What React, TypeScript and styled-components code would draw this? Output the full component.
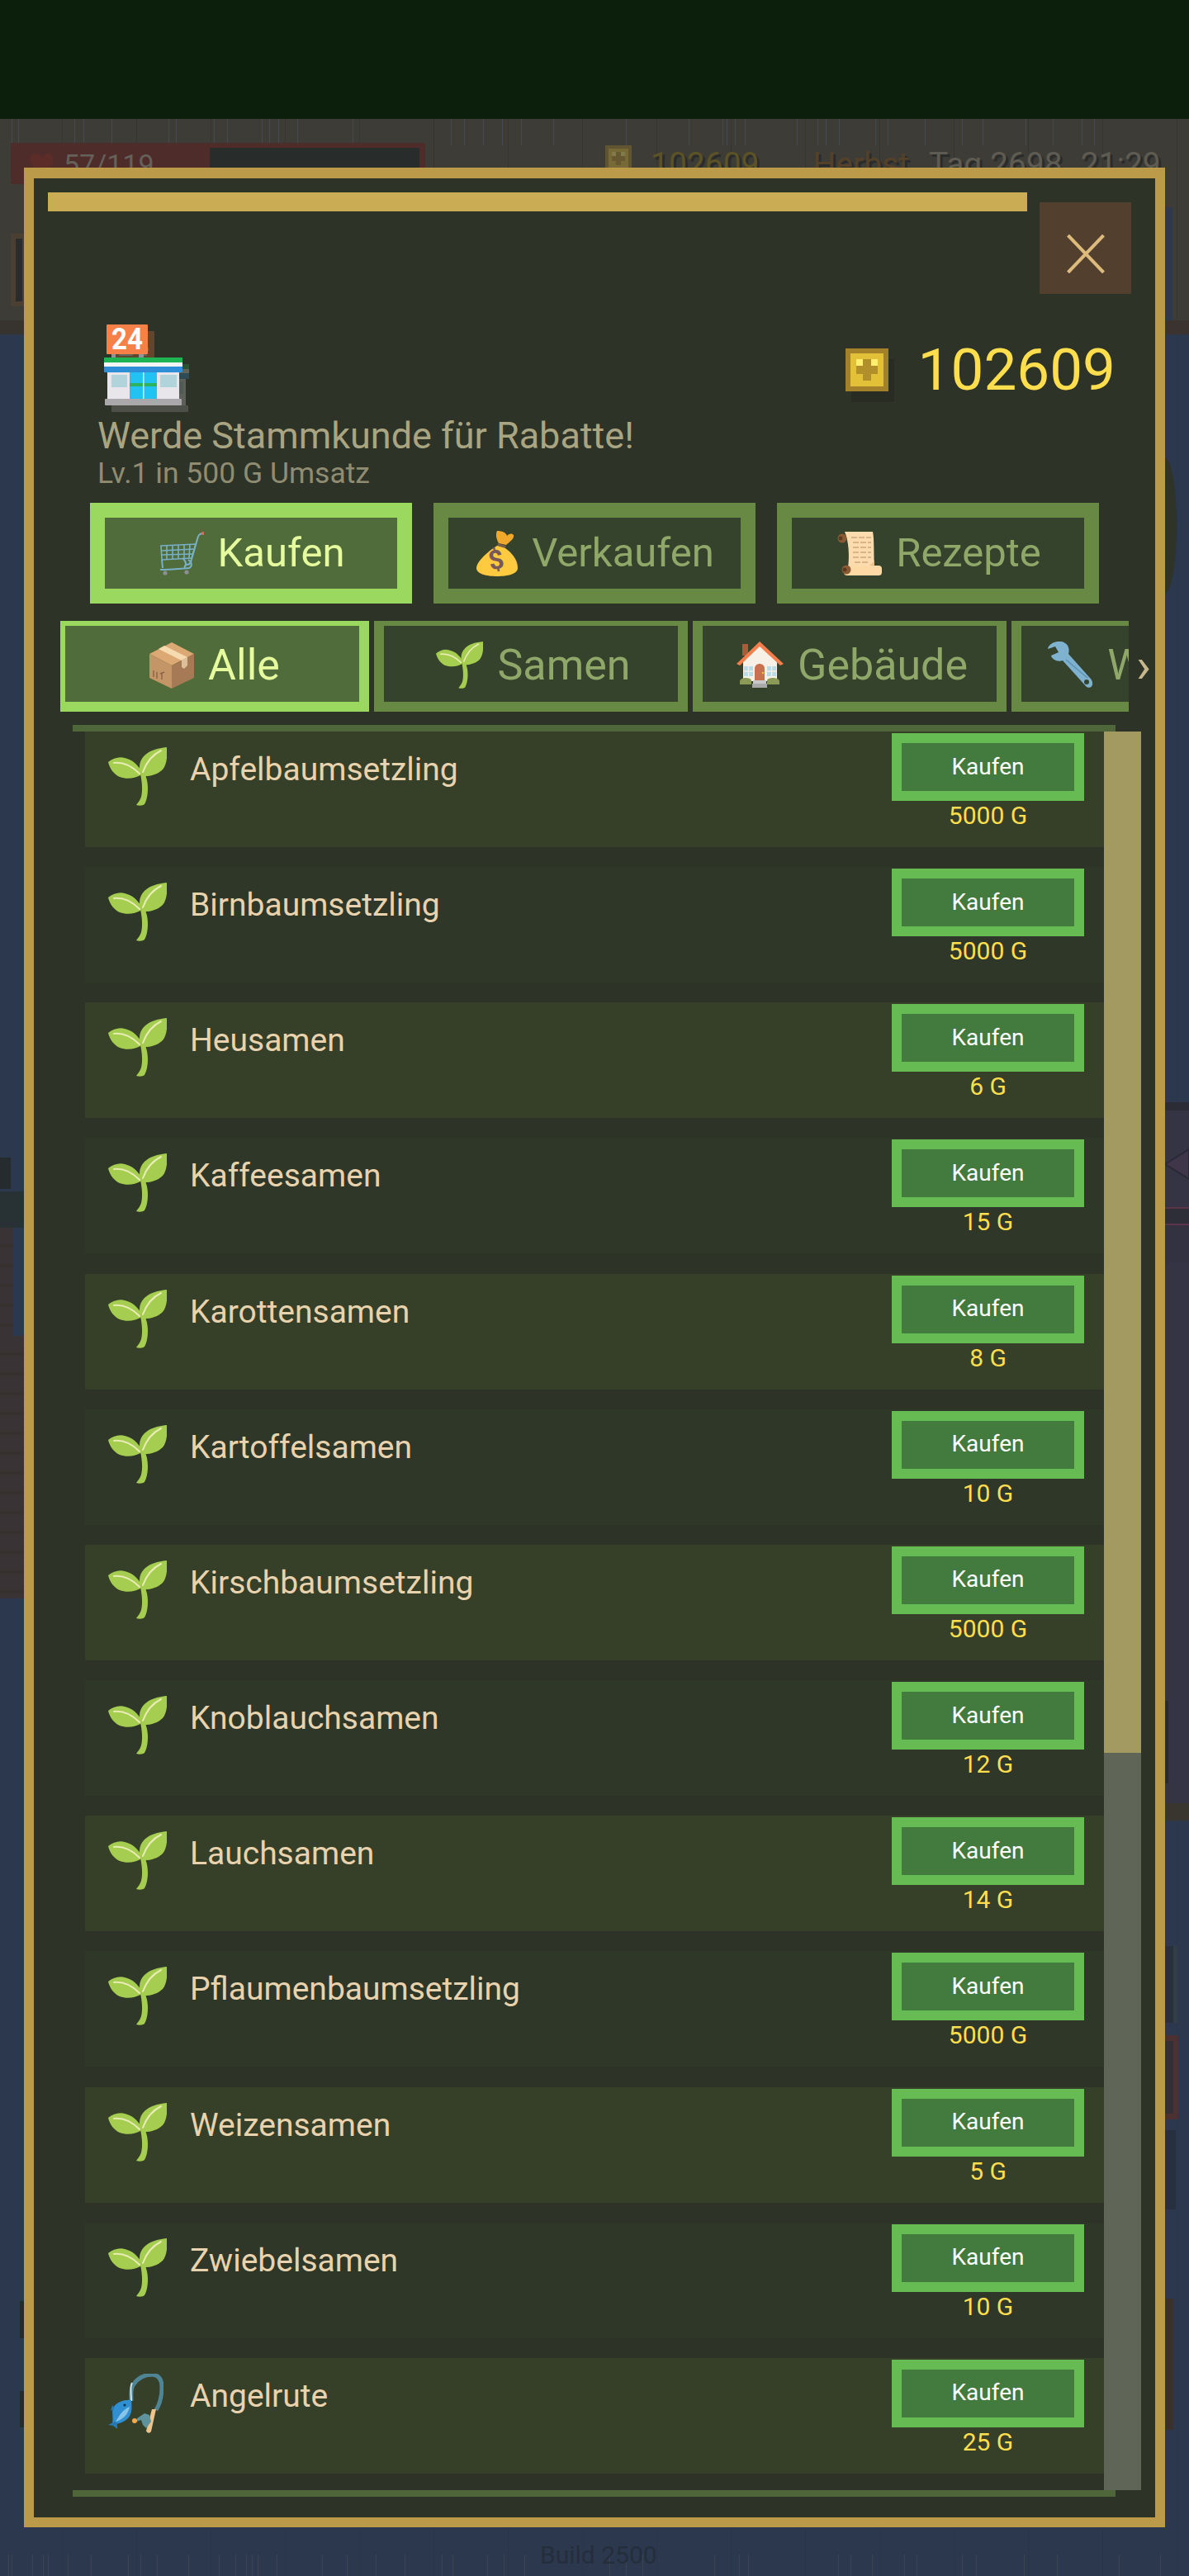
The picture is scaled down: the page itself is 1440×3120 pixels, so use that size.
import React from 'react';
import styled, { createGlobalStyle } from 'styled-components';

const GlobalStyle = createGlobalStyle`
  html, body {
    margin: 0;
    padding: 0;
    background: #2c384e;
  }
  * {
    box-sizing: border-box;
  }
`;

const Page = styled.div`
  position: relative;
  width: 1440px;
  height: 3120px;
  overflow: hidden;
  font-family: Roboto, "Liberation Sans", sans-serif;
`;

/* dimmed game scene behind the dialog */
const Scene = styled.div`
  display: flex;
  flex-direction: column;
  height: 100%;
  background: repeating-linear-gradient(90deg, transparent 0 75px, #2a3549 75px 76px, transparent 76px 90px), #2c384e;
`;

const NotchBar = styled.div`
  height: 144px;
  background: #0c1e0c;
`;

const Wall = styled.div`
  height: 244px;
  background: repeating-linear-gradient(90deg, transparent 0 75px, #363530 75px 76px, transparent 76px 90px), #3e3c36;
`;

const Ledge = styled.div`
  height: 17px;
  background: #37332e;
`;

const Decor = styled.div<{ $x: number; $y: number; $w: number; $h: number; $c: string }>`
  position: absolute;
  left: ${({ $x }) => $x}px;
  top: ${({ $y }) => $y}px;
  width: ${({ $w }) => $w}px;
  height: ${({ $h }) => $h}px;
  background: ${({ $c }) => $c};
`;

const Bricks = styled(Decor)`
  background: repeating-linear-gradient(180deg, ${({ $c }) => $c} 0 20px, #36302f 20px 24px);
`;

const Bump = styled.div`
  position: absolute;
  left: 1411px;
  top: 555px;
  width: 14px;
  height: 163px;
  background: #2e3427;
  border-radius: 0 100% 100% 0 / 0 50% 50% 0;
`;

const Diamond = styled.svg`
  position: absolute;
  left: 1411px;
  top: 1380px;
`;

const HudBar = styled.div`
  position: absolute;
  left: 13px;
  top: 173px;
  width: 502px;
  height: 50px;
  display: flex;
  padding: 6px 7px 0 0;
  background: #4d2c2a;
`;

const HudFill = styled.div`
  width: 241px;
  display: flex;
  gap: 12px;
  align-items: flex-start;
  padding-left: 23px;
  color: #65605a;
  font-size: 34px;
  line-height: 40px;
`;

const HudEmpty = styled.div`
  flex: 1;
  background: #282d2b;
`;

const HudFrame = styled.div`
  position: absolute;
  left: 13px;
  top: 283px;
  width: 20px;
  height: 88px;
  border: 6px solid #4a3f30;
  background: #282d2b;
`;

const HudRight = styled.div`
  position: absolute;
  left: 733px;
  top: 176px;
  display: flex;
  align-items: flex-start;
`;

const HudText = styled.span<{ $color: string; $gap: number }>`
  margin-left: ${({ $gap }) => $gap}px;
  color: ${({ $color }) => $color};
  font-size: 39px;
  line-height: 46px;
  white-space: nowrap;
  text-shadow: 3px 3px 0 #2a2c2b;
`;

const BuildTag = styled.div`
  position: absolute;
  left: 654px;
  top: 3077px;
  color: #252e3c;
  font-size: 30px;
  line-height: 35px;
  white-space: nowrap;
`;

/* dialog */
const Modal = styled.div`
  position: absolute;
  left: 29px;
  top: 203px;
  width: 1382px;
  height: 2858px;
  display: flex;
  flex-direction: column;
  border: 12px solid #bb9b4a;
  border-top-width: 13px;
  background: #2e3327;
`;

const TopRow = styled.div`
  display: flex;
  gap: 15px;
  align-items: flex-start;
  padding: 17px 0 0 17px;
`;

const TitleBar = styled.div`
  width: 1186px;
  height: 23px;
  background: #c9ac53;
`;

const CloseButton = styled.button`
  width: 111px;
  height: 111px;
  margin-top: 12px;
  padding: 14px 0 0;
  display: flex;
  align-items: center;
  justify-content: center;
  border: 0;
  background: #523f2e;
`;

const ShopHead = styled.div`
  display: flex;
  justify-content: space-between;
  align-items: flex-start;
  padding: 37px 48px 0 77px;
`;

const ShopInfo = styled.div`
  display: flex;
  flex-direction: column;
`;

const StoreBox = styled.div`
  padding-left: 8px;
  height: 110px;
`;

const ShopTitle = styled.div`
  color: #a9a582;
  font-size: 45px;
  line-height: 50px;
`;

const ShopLevel = styled.div`
  color: #8f8c72;
  font-size: 35.5px;
  line-height: 41px;
`;

const GoldBox = styled.div`
  display: flex;
  align-items: flex-start;
  gap: 36px;
  padding-top: 29px;
`;

const GoldAmount = styled.div`
  margin-top: -15px;
  color: #ffde4d;
  font-size: 71px;
  line-height: 82px;
`;

const MainTabs = styled.div`
  display: flex;
  gap: 26px;
  margin: 15px 0 0 68px;
`;

const MainTab = styled.div<{ $active?: boolean }>`
  width: 390px;
  height: 122px;
  padding-left: 2px;
  display: flex;
  align-items: center;
  justify-content: center;
  gap: 17px;
  border: 18px solid ${({ $active }) => ($active ? '#9ad85f' : '#688943')};
  background: ${({ $active }) => ($active ? '#4f6c3a' : '#35422c')};
  color: ${({ $active }) => ($active ? '#e6fb9e' : '#8fa768')};
  font-size: 49px;
  line-height: 56px;
`;

const SubTabsWrap = styled.div`
  position: relative;
  width: 1294px;
  height: 110px;
  margin: 21px 0 0 32px;
`;

const SubTabs = styled.div`
  height: 100%;
  display: flex;
  gap: 6px;
  overflow: hidden;
`;

const SubTab = styled.div<{ $active?: boolean }>`
  flex: none;
  width: 380px;
  height: 116px;
  margin-top: -6px;
  padding: 3px 0 0 6px;
  display: flex;
  align-items: center;
  justify-content: center;
  gap: 17px;
  border: 12px solid ${({ $active }) => ($active ? '#9ad85f' : '#688943')};
  background: ${({ $active }) => ($active ? '#4f6c3a' : '#35422c')};
  color: ${({ $active }) => ($active ? '#e6fb9e' : '#8fa768')};
  font-size: 52px;
  line-height: 60px;
  white-space: nowrap;
  &:first-child {
    margin-left: -6px;
  }
`;

const MoreArrow = styled.span`
  position: absolute;
  right: -27px;
  top: 24px;
  color: #c6b78c;
  font-size: 60px;
  line-height: 60px;
`;

const Rule = styled.div<{ $top?: number }>`
  width: 1263px;
  height: 8px;
  margin: ${({ $top }) => $top ?? 0}px 0 0 47px;
  background: #4f653a;
`;

const ListArea = styled.div`
  height: 2130px;
  display: flex;
  margin-left: 62px;
`;

const List = styled.div`
  width: 1234px;
  display: flex;
  flex-direction: column;
  gap: 24.17px;
`;

const Row = styled.div<{ $odd: boolean }>`
  flex: none;
  height: 140px;
  display: flex;
  align-items: flex-start;
  padding-right: 24px;
  background: ${({ $odd }) => ($odd ? '#363f27' : '#2e3728')};
`;

const RowIcon = styled.div`
  flex: none;
  width: 127px;
  padding: 19px 0 0 28px;
`;

const RowName = styled.div`
  flex: 1;
  margin-top: 23px;
  color: #e8d3ae;
  font-size: 39px;
  line-height: 46px;
`;

const BuyColumn = styled.div`
  width: 233px;
  display: flex;
  flex-direction: column;
  align-items: center;
  padding-top: 2px;
`;

const BuyButton = styled.button`
  width: 233px;
  height: 82px;
  padding: 0 0 2px;
  border: 12px solid #66bb53;
  background: #437a3d;
  color: #ffffff;
  font-family: inherit;
  font-size: 28px;
  line-height: 33px;
`;

const Price = styled.div`
  margin-top: 1px;
  color: #ffde4d;
  font-size: 30px;
  line-height: 34px;
`;

const ScrollTrack = styled.div`
  width: 45px;
  height: 100%;
  background: #5f6557;
`;

const ScrollThumb = styled.div`
  height: 1237px;
  background: #a29a60;
`;

const CoinBox = styled.svg<{ $shadow?: boolean; $dim?: boolean }>`
  flex: none;
  display: block;
  opacity: ${({ $dim }) => ($dim ? 0.35 : 1)};
  ${({ $shadow }) => ($shadow ? 'box-shadow: 7px 13px 0 rgba(0, 0, 0, 0.12);' : '')}
`;

const Coin = ({ size = 52, shadow = false, dim = false }: { size?: number; shadow?: boolean; dim?: boolean }) => (
  <CoinBox $shadow={shadow} $dim={dim} width={size} height={size} viewBox="0 0 52 52" shapeRendering="crispEdges">
    <rect width="52" height="52" fill="#a2812a" />
    <rect x="6" y="6" width="40" height="40" fill="#e2c037" />
    <rect x="13" y="21" width="26" height="10" fill="#b1902c" />
    <rect x="21" y="13" width="10" height="26" fill="#b1902c" />
    <rect x="13" y="13" width="8" height="8" fill="#ffee70" />
    <rect x="31" y="13" width="8" height="8" fill="#ffee70" />
  </CoinBox>
);

const Sprout = ({ size = 71 }: { size?: number }) => (
  <svg width={size} height={size} viewBox="0 0 71 71" style={{ display: 'block' }}>
    <path d="M39 32C41 42 42 52 40 60C39 64 36 67 34 70C37 71 42 71 44 69C48 62 49 50 47 40L45 33Z" fill="#a5cd50" />
    <path d="M0 18C6 13 14 11 20 13C29 15 36 21 40 29L39 34C32 38 22 39 14 36C7 33 2 26 0 18Z" fill="#a5cd50" />
    <path d="M71 0C60 1 50 4 44 10C38 16 36 24 40 35C50 36 60 33 66 27C71 21 72 10 71 0Z" fill="#a5cd50" />
    <path d="M7 19C18 18 29 23 38 32" fill="none" stroke="#e9ecb4" strokeWidth="2" strokeLinecap="round" />
    <path d="M64 4C54 9 46 19 42 30" fill="none" stroke="#e9ecb4" strokeWidth="2" strokeLinecap="round" />
  </svg>
);

const Cart = () => (
  <svg width="54" height="54" viewBox="0 0 54 54" style={{ display: 'block' }}>
    <g fill="none" stroke="#79b0c9" strokeWidth="1.6">
      <path d="M53 3C48 3 47 6 46 10L38 38C37 40 36 41 33 41" strokeWidth="2" />
      <path d="M2 18L44 16L39 33L3 35Z" />
      <path d="M2 24L42 22M3 29L40 28" />
      <path d="M9 18L9 34M16 18L16 34M23 17L23 34M30 17L30 34M37 17L36 33" />
      <path d="M3 35L4 45M1 47C10 47 22 46 36 45C40 43 40 38 35 35M28 33C33 37 33 42 30 44" strokeWidth="2" />
    </g>
    <circle cx="53" cy="3" r="2" fill="#dc6e5e" />
    <circle cx="7" cy="51" r="2.6" fill="#8d8f94" />
    <circle cx="33" cy="50" r="2.6" fill="#8d8f94" />
  </svg>
);

const MoneyBag = () => (
  <svg width="50" height="55" viewBox="0 0 50 55" style={{ display: 'block' }}>
    <path d="M25 0C23 4 24 10 27 15L36 17C42 12 46 9 45 5C42 2 39 4 37 6C36 2 31 0 25 0Z" fill="#f0a92c" />
    <path d="M26 15L36 18L34 22L25 19Z" fill="#7b5c4c" />
    <path d="M25 18C12 26 0 38 0 45C0 52 12 55 25 55C38 55 50 52 50 45C50 34 42 26 35 21Z" fill="#fdca40" />
    <text x="24" y="46" fontFamily="Roboto, sans-serif" fontWeight="700" fontSize="32" fill="#77595c" textAnchor="middle" transform="rotate(-12 24 36)">$</text>
  </svg>
);

const ScrollIcon = () => (
  <svg width="55" height="54" viewBox="0 0 55 54" style={{ display: 'block' }}>
    <path d="M10 1H44C46 10 45 30 46 44H14C16 32 15 12 10 1Z" fill="#fcdcae" />
    <path d="M18 8H42M20 14H42M20 20H42M20 26H42M20 32H42M22 38H40" stroke="#cfa778" strokeWidth="1.4" strokeDasharray="7 2" />
    <path d="M36 44C41 42 45 38 46 35V44Z" fill="#eebf83" />
    <rect x="9" y="42" width="46" height="12" rx="4" fill="#fdd9a5" />
    <circle cx="7" cy="9" r="5.5" fill="#8a5a34" />
    <circle cx="5" cy="9" r="2.4" fill="#5c3a21" />
    <circle cx="12" cy="47" r="5.5" fill="#8a5a34" />
    <circle cx="10" cy="47" r="2.4" fill="#5c3a21" />
  </svg>
);

const BoxIcon = () => (
  <svg width="54" height="56" viewBox="0 0 54 56" style={{ display: 'block' }}>
    <path d="M27 0L54 14L27 28L0 14Z" fill="#dca974" />
    <path d="M0 14L27 28V56L0 43Z" fill="#c49566" />
    <path d="M54 14L27 28V56L54 43Z" fill="#a57a55" />
    <path d="M11 8L18 4L46 18L39 22Z" fill="#f6dbb0" />
    <path d="M39 22L46 18V28L42 32L39 30Z" fill="#ddc09a" />
    <path d="M5 34V42M9 36V44M13 38L18 36M15 37V45" stroke="#8a6545" strokeWidth="1.4" fill="none" />
  </svg>
);

const HouseIcon = () => (
  <svg width="57" height="57" viewBox="0 0 57 57" style={{ display: 'block' }}>
    <rect x="7" y="3" width="7" height="14" fill="#a85c3c" />
    <path d="M8 24L28 4L49 24V48H8Z" fill="#f7f0e6" />
    <path d="M28 0L57 27L53 29L28 6L4 29L0 27Z" fill="#f47f4c" />
    <rect x="9" y="30" width="11" height="12" fill="#b8dbe8" />
    <rect x="37" y="30" width="11" height="12" fill="#b8dbe8" />
    <path d="M14.5 30V42M9 36H20M42.5 30V42M37 36H48" stroke="#f7f0e6" strokeWidth="1.3" />
    <path d="M22 47V33C22 25 34 25 34 33V47Z" fill="#c9714f" />
    <circle cx="32" cy="38" r="1.3" fill="#f1c232" />
    <path d="M4 52V48C5 43 17 43 18 47V52Z" fill="#8c9a58" />
    <path d="M37 52V47C38 43 51 43 52 48V52Z" fill="#8c9a58" />
    <rect x="20" y="47" width="16" height="4" fill="#c9c9c9" />
    <rect x="19" y="51" width="18" height="5" fill="#a9a9a9" />
  </svg>
);

const WrenchIcon = () => (
  <svg width="57" height="57" viewBox="0 0 57 57" style={{ display: 'block' }}>
    <path d="M19 0C11 -1 3 3 2 9L11 6L15 13L6 17C7 22 14 25 20 23L48 54C52 58 57 55 56 50C56 47 54 45 52 43L27 15C29 8 26 2 19 0Z" fill="#7fb2cf" />
    <circle cx="49" cy="49" r="3" fill="#35422c" />
    <path d="M24 22L50 44" stroke="#5f93b0" strokeWidth="1.6" />
  </svg>
);

const FishingRod = () => (
  <svg width="67" height="73" viewBox="0 0 67 73" style={{ display: 'block' }}>
    <path d="M28 33C28 26 27 20 30 14C36 4 46 1 54 1C62 2 65 8 65 16C65 26 63 36 58 44" fill="none" stroke="#4f8494" strokeWidth="5" />
    <path d="M29 11C26 16 28 24 28 33" fill="none" stroke="#cfe2e6" strokeWidth="2" />
    <path d="M58 43L52 70C50 73 47 72 46 69C49 60 51 50 53 43Z" fill="#eec48a" />
    <path d="M35 54L44 48L50 50L52 58L46 66L42 62L40 56L34 58Z" fill="#5f939b" />
    <circle cx="32" cy="57" r="3" fill="#f4a94e" />
    <path d="M28 32C20 31 11 34 7 40C3 45 7 52 5 60C9 62 18 60 24 54C29 49 29 40 28 32Z" fill="#2f8fd0" />
    <path d="M26 40C24 48 20 55 9 58C14 50 17 44 26 40Z" fill="#86c4ea" />
    <path d="M5 38L3 45L8 42Z" fill="#2a75b5" />
    <path d="M8 58L0 62L6 63L11 67L11 60Z" fill="#2a75b5" />
    <circle cx="20" cy="38" r="1.6" fill="#12334f" />
  </svg>
);

const Storefront = () => (
  <g>
    <rect x="3" y="0" width="50" height="36" rx="1" fill="#f58148" />
    <text x="28" y="30" textAnchor="middle" fontFamily="Roboto, sans-serif" fontWeight="700" fontSize="37" fill="#ffffff" textLength="38" lengthAdjust="spacingAndGlyphs">24</text>
    <rect x="9" y="36" width="5" height="5" fill="#8f9499" />
    <rect x="42" y="36" width="6" height="5" fill="#8f9499" />
    <rect x="0" y="40" width="95" height="6" fill="#1eb454" />
    <rect x="0" y="46" width="95" height="5" fill="#f2f4f4" />
    <rect x="0" y="51" width="95" height="7" rx="1" fill="#2e8ed8" />
    <rect x="4" y="58" width="87" height="32" fill="#e8e6ea" />
    <rect x="9" y="61" width="19" height="15" fill="#b0d4da" />
    <rect x="68" y="61" width="20" height="15" fill="#b0d4da" />
    <rect x="31" y="58" width="33" height="32" fill="#22c3f3" />
    <rect x="31" y="71" width="33" height="4" fill="#2cb35e" />
    <rect x="47" y="58" width="1.5" height="32" fill="#dff4fa" />
    <rect x="1" y="90" width="93" height="8" rx="1" fill="#aaa8aa" />
  </g>
);

const StoreIcon = () => (
  <svg width="103" height="106" viewBox="0 0 103 106" style={{ display: 'block' }}>
    <g transform="translate(8 8)" opacity="0.25">
      <Storefront />
    </g>
    <Storefront />
  </svg>
);

const CloseIcon = () => (
  <svg width="46" height="47" viewBox="0 0 46 47">
    <path d="M1.5 1L44.5 46M44.5 1L1.5 46" stroke="#dcbb7d" strokeWidth="4" fill="none" />
  </svg>
);

const HeartIcon = () => (
  <svg width="29" height="28" viewBox="0 0 29 28" style={{ display: 'block', marginTop: 6 }}>
    <path d="M14.5 28L2 14C-2 8 1 1 7 1C10 1 13 3 14.5 6C16 3 19 1 22 1C28 1 31 8 27 14Z" fill="#5c2c28" />
  </svg>
);

type Item = { name: string; price: string; icon?: 'rod' };

const ITEMS: Item[] = [
  { name: 'Apfelbaumsetzling', price: '5000 G' },
  { name: 'Birnbaumsetzling', price: '5000 G' },
  { name: 'Heusamen', price: '6 G' },
  { name: 'Kaffeesamen', price: '15 G' },
  { name: 'Karottensamen', price: '8 G' },
  { name: 'Kartoffelsamen', price: '10 G' },
  { name: 'Kirschbaumsetzling', price: '5000 G' },
  { name: 'Knoblauchsamen', price: '12 G' },
  { name: 'Lauchsamen', price: '14 G' },
  { name: 'Pflaumenbaumsetzling', price: '5000 G' },
  { name: 'Weizensamen', price: '5 G' },
  { name: 'Zwiebelsamen', price: '10 G' },
  { name: 'Angelrute', price: '25 G', icon: 'rod' },
];

const PATCHES: [number, number, number, number, string][] = [
  [0, 1402, 13, 38, '#262b2d'],
  [0, 1443, 29, 44, '#283235'],
  [24, 2787, 5, 45, '#252b2d'],
  [24, 2896, 5, 44, '#252b2d'],
  [1411, 251, 9, 137, '#2d3a4e'],
  [1411, 388, 29, 17, '#3a3330'],
  [1411, 1335, 29, 849, '#353444'],
  [1411, 1335, 29, 10, '#2b2c35'],
  [1411, 1462, 29, 2, '#5a3448'],
  [1411, 1464, 29, 18, '#2e2e38'],
  [1411, 1482, 29, 2, '#5a3448'],
  [1411, 1484, 29, 46, '#333240'],
  [1411, 2060, 4, 100, '#2a2a33'],
  [1411, 2184, 29, 21, '#39352f'],
  [1421, 2357, 5, 93, '#333d48'],
  [1411, 2357, 10, 93, '#27303d'],
  [1411, 2465, 16, 102, '#4d3032'],
  [1411, 2472, 10, 88, '#332f36'],
  [1411, 2580, 13, 96, '#27303e'],
  [1411, 2784, 10, 159, '#3a312c'],
];

// rain streaks, only visible around the dialog
const STREAKS_TOP = [14, 22, 90, 101, 135, 204, 213, 259, 275, 317, 326, 337, 360, 427, 546, 562, 585, 608, 631, 670, 758, 834, 875, 880, 890, 902, 965, 990, 1000, 1016, 1060, 1075, 1120, 1165, 1190, 1242, 1275, 1310, 1325];
const STREAKS_BOTTOM = [10, 14, 39, 52, 58, 82, 110, 155, 170, 190, 228, 265, 285, 298, 305, 312, 335, 390, 420, 455, 490, 535, 548, 590, 610, 635, 738, 758, 778, 865, 895, 906, 1015, 1030, 1056, 1095, 1110, 1165, 1182, 1240, 1280, 1355, 1405];

const App = () => {
  return (
    <Page>
      <GlobalStyle />
      <Scene>
        <NotchBar />
        <Wall />
        <Ledge />
      </Scene>
      {STREAKS_TOP.map((x) => (
        <Decor key={`t${x}`} $x={x} $y={144} $w={1} $h={32} $c="#454a52" />
      ))}
      {STREAKS_BOTTOM.map((x) => (
        <Decor key={`b${x}`} $x={x} $y={3094} $w={1} $h={26} $c="#3c4452" />
      ))}
      {PATCHES.map(([x, y, w, h, c]) => (
        <Decor key={`${x}-${y}`} $x={x} $y={y} $w={w} $h={h} $c={c} />
      ))}
      <Bricks $x={0} $y={1487} $w={16} $h={131} $c="#3a3336" />
      <Bricks $x={0} $y={1618} $w={29} $h={318} $c="#3a3336" />
      <Bump />
      <Diamond width="29" height="60" viewBox="0 0 29 60">
        <path d="M0 30L29 12V48Z" fill="#40364a" stroke="#2a2a36" strokeWidth="2" />
      </Diamond>
      <HudBar>
        <HudFill>
          <HeartIcon />
          <span>57/119</span>
        </HudFill>
        <HudEmpty />
      </HudBar>
      <HudFrame />
      <HudRight>
        <Coin size={32} dim />
        <HudText $color="#5b5225" $gap={23}>102609</HudText>
        <HudText $color="#53412a" $gap={65}>Herbst</HudText>
        <HudText $color="#5d5b52" $gap={24}>Tag 2698</HudText>
        <HudText $color="#5d5b52" $gap={22}>21:29</HudText>
      </HudRight>
      <BuildTag>Build 2500</BuildTag>

      <Modal>
        <TopRow>
          <TitleBar />
          <CloseButton>
            <CloseIcon />
          </CloseButton>
        </TopRow>
        <ShopHead>
          <ShopInfo>
            <StoreBox>
              <StoreIcon />
            </StoreBox>
            <ShopTitle>Werde Stammkunde für Rabatte!</ShopTitle>
            <ShopLevel>Lv.1 in 500 G Umsatz</ShopLevel>
          </ShopInfo>
          <GoldBox>
            <Coin shadow />
            <GoldAmount>102609</GoldAmount>
          </GoldBox>
        </ShopHead>
        <MainTabs>
          <MainTab $active>
            <Cart />
            Kaufen
          </MainTab>
          <MainTab>
            <MoneyBag />
            Verkaufen
          </MainTab>
          <MainTab>
            <ScrollIcon />
            Rezepte
          </MainTab>
        </MainTabs>
        <SubTabsWrap>
          <SubTabs>
            <SubTab $active>
              <BoxIcon />
              Alle
            </SubTab>
            <SubTab>
              <Sprout size={57} />
              Samen
            </SubTab>
            <SubTab>
              <HouseIcon />
              Gebäude
            </SubTab>
            <SubTab>
              <WrenchIcon />
              Werkzeug
            </SubTab>
          </SubTabs>
          <MoreArrow>›</MoreArrow>
        </SubTabsWrap>
        <Rule $top={16} />
        <ListArea>
          <List>
            {ITEMS.map((item, i) => (
              <Row key={item.name} $odd={i % 2 === 0}>
                <RowIcon>{item.icon === 'rod' ? <FishingRod /> : <Sprout />}</RowIcon>
                <RowName>{item.name}</RowName>
                <BuyColumn>
                  <BuyButton>Kaufen</BuyButton>
                  <Price>{item.price}</Price>
                </BuyColumn>
              </Row>
            ))}
          </List>
          <ScrollTrack>
            <ScrollThumb />
          </ScrollTrack>
        </ListArea>
        <Rule />
      </Modal>
    </Page>
  );
};

export default App;
